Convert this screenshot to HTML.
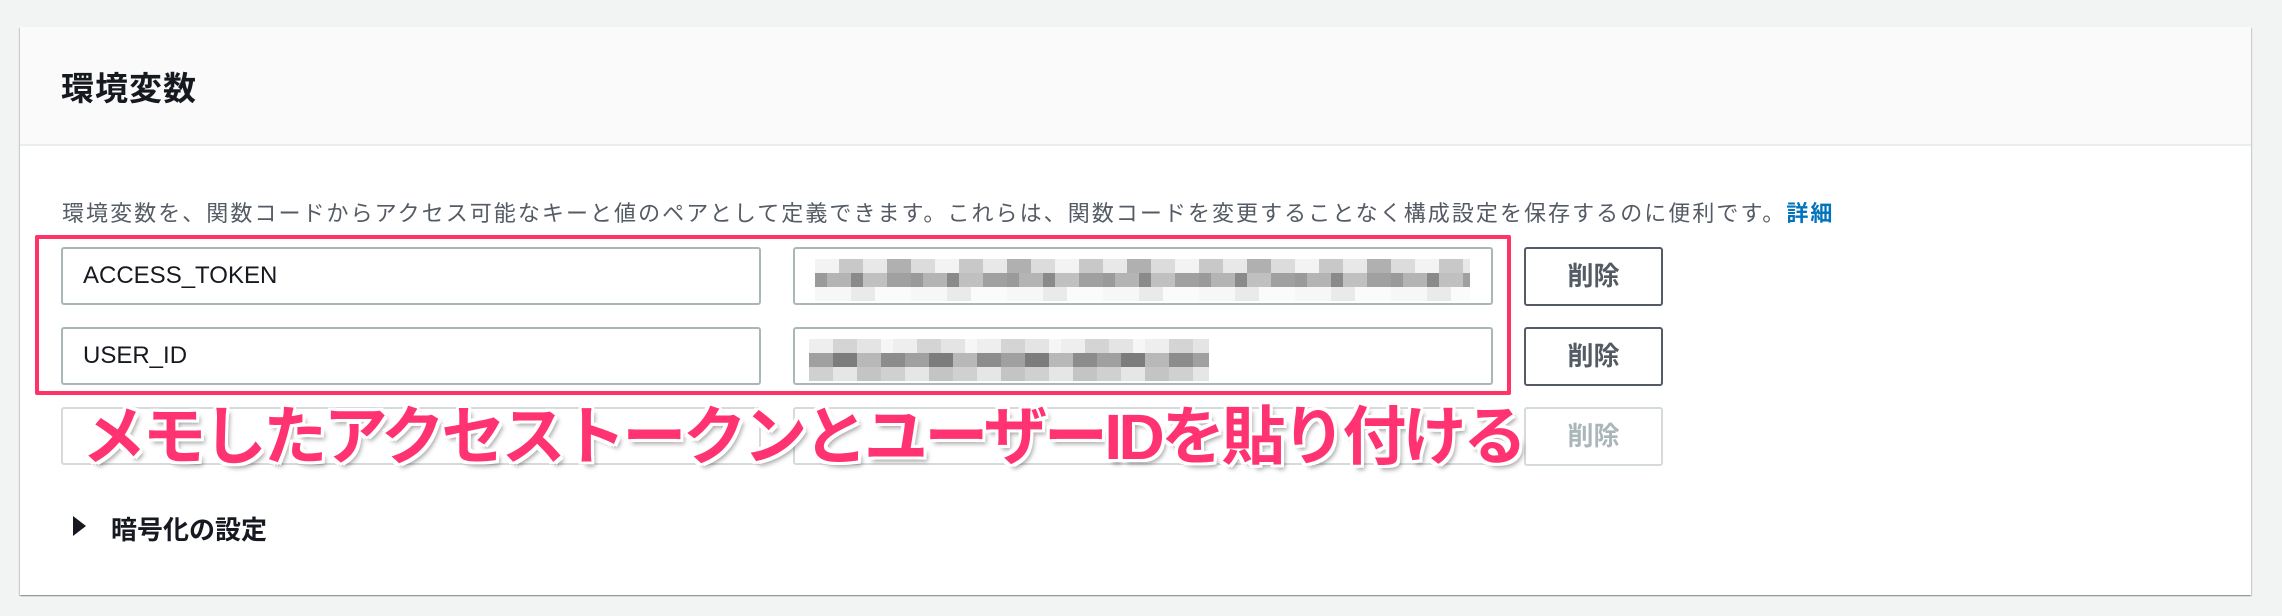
<!DOCTYPE html>
<html><head><meta charset="utf-8"><style>
body{margin:0;width:2282px;height:616px;background:#f2f3f3;position:relative;overflow:hidden;font-family:"Liberation Sans","Noto Sans CJK JP",sans-serif}
.panel{position:absolute;left:20px;top:27px;width:2231px;height:568px;background:#fff;box-shadow:0 1px 1px 0 rgba(0,28,36,.3),1px 1px 1px 0 rgba(0,28,36,.15),-1px 1px 1px 0 rgba(0,28,36,.15)}
.head{position:absolute;left:0;top:0;right:0;height:117px;background:#fafafa;border-bottom:2px solid #eaeded}
.title{position:absolute;left:41px;top:35px;font-size:33px;font-weight:bold;color:#16191f;letter-spacing:1px}
.desc{position:absolute;left:42px;top:169px;font-size:22px;color:#545b64;white-space:nowrap;letter-spacing:2.05px}
.desc b{color:#0073bb}
.in{position:absolute;height:55px;border:2px solid #aab7b8;border-radius:3px;background:#fff;box-sizing:border-box}
.in span{position:absolute;left:20px;top:13px;font-size:24px;color:#16191f}
.btn{position:absolute;left:1504px;width:139px;height:59px;border:2px solid #545b64;border-radius:3px;box-sizing:border-box;text-align:center;line-height:54px;font-size:26px;font-weight:bold;color:#545b64}
.btn.dis{border-color:#d5dbdb;color:#aab7b8}
.mos{position:absolute;height:14px}
.red{position:absolute;left:15px;top:208px;width:1476px;height:160px;border:4px solid #ff3366;box-sizing:border-box;border-radius:2px}
.ov{position:absolute;left:62px;top:359px;font-size:64px;font-weight:bold;color:#ff3371;white-space:nowrap;letter-spacing:-3.6px;text-shadow:0 0 3px #fff,3px 3px 0 #fff,-3px -3px 0 #fff,3px -3px 0 #fff,-3px 3px 0 #fff,0 3px 0 #fff,0 -3px 0 #fff,3px 0 0 #fff,-3px 0 0 #fff,4px 5px 5px rgba(0,0,0,.35)}
.enc{position:absolute;left:91px;top:483px;font-size:26px;font-weight:bold;color:#16191f}
.tri{position:absolute;left:53px;top:489px;width:0;height:0;border-top:10px solid transparent;border-bottom:10px solid transparent;border-left:13px solid #16191f}
</style></head><body>
<div class="panel">
<div class="head"><div class="title">環境変数</div></div>
<div class="desc">環境変数を、関数コードからアクセス可能なキーと値のペアとして定義できます。これらは、関数コードを変更することなく構成設定を保存するのに便利です。<b>詳細</b></div>

<div class="in" style="left:41px;top:220px;width:700px;height:58px"><span>ACCESS_TOKEN</span></div>
<div class="in" style="left:773px;top:220px;width:700px;height:58px">
<div class="mos" style="left:20px;top:10px;width:655px;background:repeating-linear-gradient(90deg,#f3f3f3 0 24px,#c8c8c8 24px 48px,#e8e8e8 48px 72px,#b0b0b0 72px 96px,#dcdcdc 96px 120px)"></div>
<div class="mos" style="left:20px;top:24px;width:655px;background:repeating-linear-gradient(90deg,#9a9a9a 0 12px,#b4b4b4 12px 36px,#8a8a8a 36px 48px,#c0c0c0 48px 72px,#a0a0a0 72px 96px)"></div>
<div class="mos" style="left:20px;top:38px;width:655px;background:repeating-linear-gradient(90deg,#f7f7f7 0 36px,#eaeaea 36px 60px,#fbfbfb 60px 96px)"></div>
</div>
<div class="btn" style="top:220px">削除</div>

<div class="in" style="left:41px;top:300px;width:700px;height:58px"><span>USER_ID</span></div>
<div class="in" style="left:773px;top:300px;width:700px;height:58px">
<div class="mos" style="left:14px;top:10px;width:400px;background:repeating-linear-gradient(90deg,#eeeeee 0 24px,#d4d4d4 24px 48px,#e4e4e4 48px 72px,#f6f6f6 72px 84px)"></div>
<div class="mos" style="left:14px;top:24px;width:400px;background:repeating-linear-gradient(90deg,#a0a0a0 0 24px,#7c7c7c 24px 48px,#b8b8b8 48px 72px,#8c8c8c 72px 96px)"></div>
<div class="mos" style="left:14px;top:38px;width:400px;background:repeating-linear-gradient(90deg,#d0d0d0 0 24px,#e6e6e6 24px 48px,#c4c4c4 48px 72px)"></div>
</div>
<div class="btn" style="top:300px">削除</div>

<div class="in" style="left:41px;top:380px;width:700px;height:58px;border-color:#d5dbdb"></div>
<div class="in" style="left:773px;top:380px;width:700px;height:58px;border-color:#d5dbdb"></div>
<div class="btn dis" style="top:380px">削除</div>

<div class="red"></div>
<div class="ov">メモしたアクセストークンとユーザーIDを貼り付ける</div>

<div class="tri"></div>
<div class="enc">暗号化の設定</div>
</div>
</body></html>
